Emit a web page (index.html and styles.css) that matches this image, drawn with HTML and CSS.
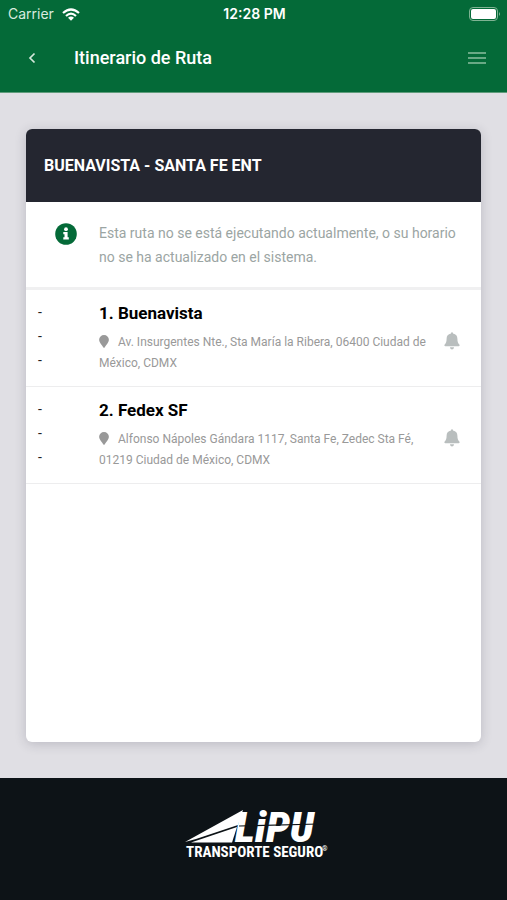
FILE: index.html
```html
<!DOCTYPE html>
<html lang="es">
<head>
<meta charset="utf-8">
<meta name="viewport" content="width=device-width, initial-scale=1">
<title>Itinerario de Ruta</title>
<link rel="stylesheet" href="styles.css">
</head>
<body>
<header class="top">
  <div class="status">
    <span class="carrier">Carrier
      <svg width="18" height="13" viewBox="0 0 18 13" aria-hidden="true"><g fill="none" stroke="#fff" stroke-width="2.2"><path d="M1 5Q9-2 17 5"/><path d="M4 8Q9 3.400 14 8"/></g><path d="M6 9.700Q9 7.300 12 9.700L9 12.800Z" fill="#fff"/></svg>
    </span>
    <time>12:28 PM</time>
    <svg class="battery" width="32" height="14" viewBox="0 0 32 14" aria-hidden="true"><rect x=".5" y=".5" width="28" height="13" rx="3.500" fill="none" stroke="#7fb393"/><rect x="2" y="2" width="25" height="10" rx="2" fill="#fff"/><path d="M30 5q2 2 0 4z" fill="#7fb393"/></svg>
  </div>
  <nav class="bar">
    <button class="icon-button" type="button" aria-label="Volver"><svg width="8" height="12" viewBox="0 0 8 12"><path d="M6.500 1.500 2 6l4.500 4.500" fill="none" stroke="#d4e8db" stroke-width="1.700"/></svg></button>
    <h1>Itinerario de Ruta</h1>
    <button class="icon-button" type="button" aria-label="Menú"><svg width="18" height="14" viewBox="0 0 18 14"><path d="M0 2h18M0 7h18M0 12h18" stroke="#8abf9e" stroke-width="1.600"/></svg></button>
  </nav>
</header>
<main>
  <section class="card">
    <h2>BUENAVISTA - SANTA FE ENT</h2>
    <div class="notice">
      <svg width="22" height="22" viewBox="0 0 22 22" aria-hidden="true"><circle cx="11" cy="11" r="10.800" fill="#046a38"/><circle cx="11" cy="6.200" r="1.900" fill="#fff"/><path d="M8.300 9h4.300v5.200h1.200v2.200H8.300v-2.200h1.200v-3H8.300z" fill="#fff"/></svg>
      <p>Esta ruta no se está ejecutando actualmente, o su horario no se ha actualizado en el sistema.</p>
    </div>
    <ol class="stops">
      <li>
        <div class="times"><span>-</span><span>-</span><span>-</span></div>
        <div class="place">
          <h3>1. Buenavista</h3>
          <p><svg class="pin" width="10" height="13" viewBox="0 0 10 13" aria-hidden="true"><path d="M5 0a4.900 4.900 0 0 1 4.900 4.900C9.900 7.300 7 10 5.800 12.300q-.8 1-1.600 0C3 10 .1 7.300.1 4.900A4.900 4.900 0 0 1 5 0z" fill="#999"/></svg>Av. Insurgentes Nte., Sta María la Ribera, 06400 Ciudad de México, CDMX</p>
        </div>
        <button class="bell" type="button" aria-label="Avisar en Buenavista"><svg width="16" height="18" viewBox="0 0 16 18"><path d="M7 1.500q0-1.300 1-1.300t1 1.300c3 .5 4.400 2.500 4.400 5.300 0 3.200.6 4.500 1.900 5.700.8.800.3 1.700-.6 1.700H1.300c-.9 0-1.400-.9-.6-1.700 1.300-1.200 1.900-2.500 1.900-5.700C2.600 4 4 2 7 1.500zM5.900 15.300h4.200Q9.700 17.500 8 17.500T5.900 15.300z" fill="#b9bebe"/></svg></button>
      </li>
      <li>
        <div class="times"><span>-</span><span>-</span><span>-</span></div>
        <div class="place">
          <h3>2. Fedex SF</h3>
          <p><svg class="pin" width="10" height="13" viewBox="0 0 10 13" aria-hidden="true"><path d="M5 0a4.900 4.900 0 0 1 4.900 4.900C9.900 7.300 7 10 5.800 12.300q-.8 1-1.600 0C3 10 .1 7.300.1 4.900A4.900 4.900 0 0 1 5 0z" fill="#999"/></svg>Alfonso Nápoles Gándara 1117, Santa Fe, Zedec Sta Fé, 01219 Ciudad de México, CDMX</p>
        </div>
        <button class="bell" type="button" aria-label="Avisar en Fedex SF"><svg width="16" height="18" viewBox="0 0 16 18"><path d="M7 1.500q0-1.300 1-1.300t1 1.300c3 .5 4.400 2.500 4.400 5.300 0 3.200.6 4.500 1.900 5.700.8.800.3 1.700-.6 1.700H1.300c-.9 0-1.400-.9-.6-1.700 1.300-1.200 1.900-2.500 1.900-5.700C2.600 4 4 2 7 1.500zM5.900 15.300h4.200Q9.700 17.500 8 17.500T5.900 15.300z" fill="#b9bebe"/></svg></button>
      </li>
    </ol>
  </section>
</main>
<footer>
  <svg width="144" height="52" viewBox="0 0 144 52" role="img" aria-label="LiPU Transporte Seguro">
    <path d="M0 33 58 1 53 16 11 30Z" fill="#fff"/>
    <path d="M6 33.500 52 18 47 33.500Z" fill="#fff"/>
    <text class="logo-name" x="50" y="33">LiPU</text>
    <path d="M54 17 134 15" stroke="#0d1317" stroke-width="1.200"/>
    <text class="logo-tag" x="1" y="48">TRANSPORTE SEGURO</text>
    <text class="logo-mark" x="137" y="42">®</text>
  </svg>
</footer>
</body>
</html>
```
FILE: styles.css
```css
* { box-sizing: border-box; }
body {
  margin: 0;
  min-height: 100vh;
  display: flex;
  flex-direction: column;
  background: #e0dfe4;
  font-family: Roboto, "Liberation Sans", sans-serif;
}
h1, h2, h3, p, ol { margin: 0; padding: 0; }
button { padding: 0; border: 0; background: none; display: grid; place-items: center; }
svg { display: block; }

.top { background: #046a38; color: #fff; border-bottom: 1px solid #5f9c7b; }
.status {
  display: grid;
  grid-template-columns: 1fr auto 1fr;
  align-items: center;
  height: 28px;
  padding: 0 6px 0 8px;
  font: 14px/20px Inter, sans-serif;
}
.carrier { display: flex; align-items: center; gap: 8px; color: #d9eadf; }
.status time { font-weight: 600; }
.battery { justify-self: end; }
.bar { display: flex; align-items: center; height: 64px; padding: 0 18px 4px 20px; }
.bar h1 { flex: 1; margin-left: 30px; font-size: 18px; font-weight: 500; line-height: 24px; }
.icon-button { width: 24px; height: 32px; }

main { flex: 1; display: flex; padding: 36px 26px; }
.card {
  flex: 1;
  overflow: hidden;
  border-radius: 6px;
  background: #fff;
  box-shadow: 0 2px 12px rgba(40, 40, 60, .2);
}
.card h2 {
  padding: 25px 18px 24px;
  background: #242630;
  color: #fff;
  font-size: 16px;
  font-weight: 700;
  line-height: 24px;
}
.notice {
  display: flex;
  align-items: flex-start;
  gap: 22px;
  padding: 19px 24px 18px 29px;
  border-bottom: 3px solid #f0f0f1;
  color: #9ba5a3;
  font-size: 14px;
  line-height: 24px;
}
.notice svg { flex: none; margin-top: 2px; }

.stops { list-style: none; }
.stops li {
  display: flex;
  padding: 10px 20px 12px 12px;
  border-bottom: 1px solid #ededee;
}
.times { width: 61px; display: flex; flex-direction: column; color: #222; font-size: 14px; line-height: 24px; }
.place { flex: 1; padding-right: 8px; color: #999; font-size: 12px; line-height: 21px; }
.place h3 { margin-bottom: 6px; color: #000; font-size: 17px; font-weight: 700; line-height: 26px; }
.pin { display: inline-block; margin-right: 9px; vertical-align: -2px; }
.bell { width: 18px; height: 20px; margin-top: 31px; }

footer { display: grid; justify-items: center; height: 122px; padding-top: 31px; background: #0d1317; }
footer svg { margin-left: 6px; overflow: visible; }
footer text { fill: #fff; font-family: "Roboto Condensed", Roboto, sans-serif; font-weight: 700; }
footer .logo-name { font-size: 43px; font-style: italic; font-weight: 900; }
.logo-tag { font-size: 15px; }
.logo-mark { font-size: 7px; }
```
